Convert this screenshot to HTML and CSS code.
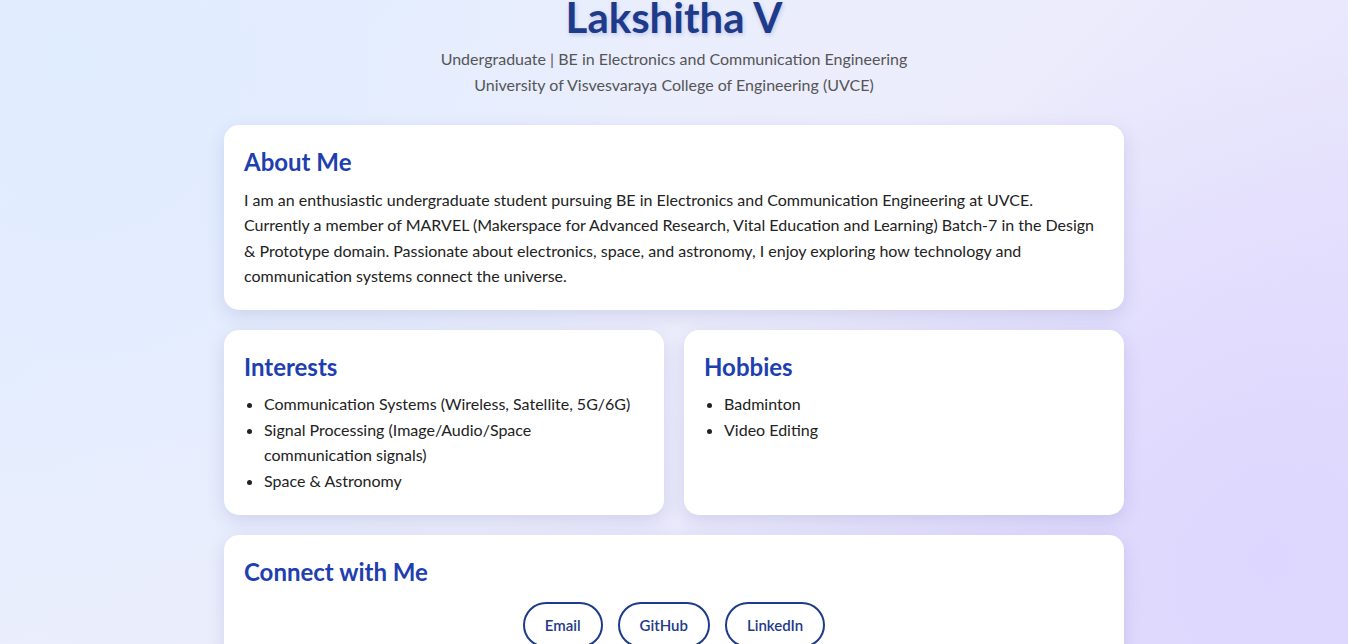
FILE: index.html
```html
<!DOCTYPE html>
<html lang="en">
<head>
<meta charset="utf-8">
<title>Lakshitha V</title>
<link rel="stylesheet" href="styles.css">
</head>
<body>
<header class="header">
  <h1 class="name">Lakshitha V</h1>
  <p class="sub">Undergraduate | BE in Electronics and Communication Engineering</p>
  <p class="sub">University of Visvesvaraya College of Engineering (UVCE)</p>
</header>
<main class="container">
  <section class="card">
    <h2 class="card-title">About Me</h2>
    <p class="text">I am an enthusiastic undergraduate student pursuing BE in Electronics and Communication Engineering at UVCE.<br>Currently a member of MARVEL (Makerspace for Advanced Research, Vital Education and Learning) Batch-7 in the Design &amp; Prototype domain. Passionate about electronics, space, and astronomy, I enjoy exploring how technology and communication systems connect the universe.</p>
  </section>
  <div class="row">
    <section class="card">
      <h2 class="card-title">Interests</h2>
      <ul class="list">
        <li>Communication Systems (Wireless, Satellite, 5G/6G)</li>
        <li>Signal Processing (Image/Audio/Space communication signals)</li>
        <li>Space &amp; Astronomy</li>
      </ul>
    </section>
    <section class="card">
      <h2 class="card-title">Hobbies</h2>
      <ul class="list">
        <li>Badminton</li>
        <li>Video Editing</li>
      </ul>
    </section>
  </div>
  <section class="card">
    <h2 class="card-title">Connect with Me</h2>
    <div class="links">
      <a class="btn" href="#">Email</a>
      <a class="btn" href="#">GitHub</a>
      <a class="btn" href="#">LinkedIn</a>
    </div>
  </section>
</main>
</body>
</html>
```
FILE: styles.css
```css
* { box-sizing: border-box; }
html, body { margin: 0; padding: 0; }
body {
  font-family: Lato, "Noto Sans", sans-serif;
  color: #1f1f1f;
  min-height: 100vh;
  background:
    radial-gradient(circle at 1270px 560px, #ddd6fe 0, rgba(221,214,254,0.6) 200px, rgba(221,214,254,0) 520px),
    radial-gradient(circle at 70px 60px, #e0ecff 0, rgba(224,236,255,0.6) 250px, rgba(224,236,255,0) 600px),
    linear-gradient(135deg, #e6efff 0%, #ecedfc 50%, #e3dcfd 100%);
}
.header {
  text-align: center;
  padding: 0 0 27px;
}
.name {
  margin: -8px 0 4px;
  font-size: 42px;
  font-weight: 700;
  color: #1e3a8a;
  line-height: 1.2;
  text-shadow: 1px 2px 4px rgba(30,58,138,0.2);
}
.sub {
  margin: 0;
  font-size: 16px;
  line-height: 26px;
  color: #555;
}
.container {
  width: 900px;
  margin: 0 auto;
  display: flex;
  flex-direction: column;
  gap: 20px;
}
.row {
  display: grid;
  grid-template-columns: 1fr 1fr;
  gap: 20px;
}
.card {
  background: #fff;
  border-radius: 15px;
  padding: 20px 20px 21px;
  box-shadow: 0 6px 18px rgba(60, 70, 140, 0.15);
}
.card-title {
  margin: 1px 0 9px;
  font-size: 24px;
  font-weight: 700;
  color: #1e40af;
  line-height: 1.3;
}
.text {
  margin: 0;
  font-size: 16px;
  line-height: 1.6;
  color: #222;
}
.list {
  margin: 1px 0 0;
  padding: 0 6px 0 20px;
  font-size: 16px;
  line-height: 1.6;
  color: #222;
}
.links {
  display: flex;
  justify-content: center;
  gap: 15px;
  padding-top: 6px;
}
.btn {
  display: inline-block;
  padding: 11px 20px;
  border: 2px solid #1e3a8a;
  border-radius: 25px;
  color: #1e3a8a;
  font-weight: 600;
  font-size: 15px;
  text-decoration: none;
  line-height: 20px;
}
```
